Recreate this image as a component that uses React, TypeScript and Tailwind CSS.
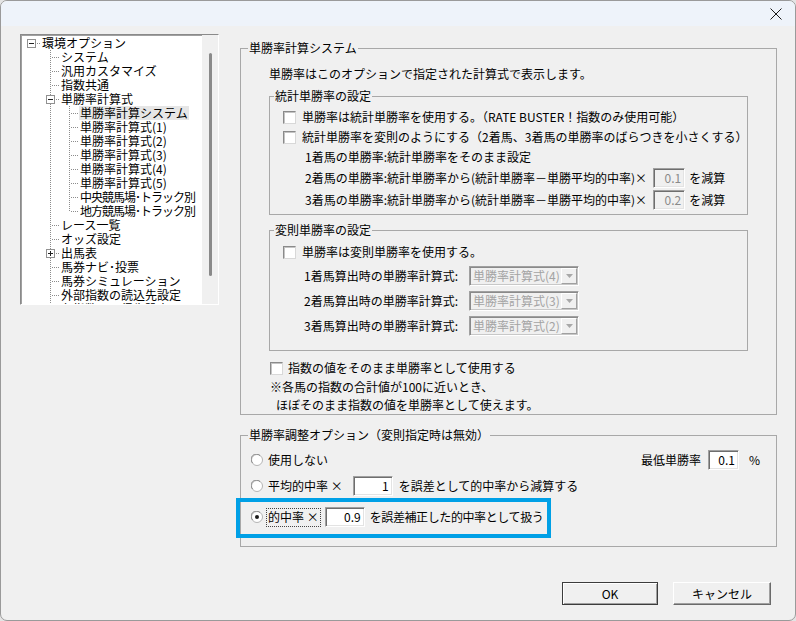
import React from "react";

type Cell = "blank" | "pipe" | "tee" | "ell" | "teeMinus" | "teePlus" | "rootMinus";

const TREE: { cells: Cell[]; label: string; selected?: boolean; tight?: boolean }[] = [
  { cells: ["rootMinus"], label: "環境オプション" },
  { cells: ["blank", "tee"], label: "システム" },
  { cells: ["blank", "tee"], label: "汎用カスタマイズ" },
  { cells: ["blank", "tee"], label: "指数共通" },
  { cells: ["blank", "teeMinus"], label: "単勝率計算式" },
  { cells: ["blank", "pipe", "tee"], label: "単勝率計算システム", selected: true },
  { cells: ["blank", "pipe", "tee"], label: "単勝率計算式(1)" },
  { cells: ["blank", "pipe", "tee"], label: "単勝率計算式(2)" },
  { cells: ["blank", "pipe", "tee"], label: "単勝率計算式(3)" },
  { cells: ["blank", "pipe", "tee"], label: "単勝率計算式(4)" },
  { cells: ["blank", "pipe", "tee"], label: "単勝率計算式(5)" },
  { cells: ["blank", "pipe", "tee"], label: "中央競馬場･トラック別", tight: true },
  { cells: ["blank", "pipe", "ell"], label: "地方競馬場･トラック別", tight: true },
  { cells: ["blank", "tee"], label: "レース一覧" },
  { cells: ["blank", "tee"], label: "オッズ設定" },
  { cells: ["blank", "teePlus"], label: "出馬表" },
  { cells: ["blank", "tee"], label: "馬券ナビ･投票" },
  { cells: ["blank", "tee"], label: "馬券シミュレーション" },
  { cells: ["blank", "tee"], label: "外部指数の読込先設定" },
  { cells: ["blank", "tee"], label: "各指数の取得先設定" },
];

// dotted tree connector, one 19x14 column
function TreeCell({ type }: { type: Cell }) {
  const v = (from: number, to: number) => {
    const r = [];
    for (let y = from; y < to; y += 2) r.push(<rect key={"v" + y} x={9} y={y} width={1} height={1} />);
    return r;
  };
  const h = (from: number) => {
    const r = [];
    for (let x = from; x < 19; x += 2) r.push(<rect key={"h" + x} x={x} y={7} width={1} height={1} />);
    return r;
  };
  const box = type === "teeMinus" || type === "teePlus" || type === "rootMinus";
  return (
    <svg width="19" height="14" viewBox="0 0 19 14" className="shrink-0">
      <g fill="#8c8c8c">
        {type === "pipe" && v(0, 14)}
        {type === "tee" && [...v(0, 14), ...h(11)]}
        {type === "ell" && [...v(0, 8), ...h(11)]}
        {(type === "teeMinus" || type === "teePlus") && [...v(0, 3), ...v(12, 14), ...h(15)]}
        {type === "rootMinus" && h(15)}
      </g>
      {box && (
        <>
          <rect x="5.5" y="3.5" width="8" height="8" fill="#fff" stroke="#919191" />
          <rect x="7" y="7" width="5" height="1" fill="#222" />
          {type === "teePlus" && <rect x="9" y="5" width="1" height="5" fill="#222" />}
        </>
      )}
    </svg>
  );
}

function CheckBox() {
  return (
    <span className="inline-block w-[13px] h-[13px] shrink-0 bg-white border border-t-[#8a8a8a] border-l-[#8a8a8a] border-r-[#d8d8d8] border-b-[#d8d8d8] shadow-[inset_1px_1px_0_#c4c4c4]" />
  );
}

function Radio({ checked }: { checked?: boolean }) {
  return (
    <svg width="12" height="12" viewBox="0 0 12 12" className="shrink-0">
      <circle cx="6" cy="6" r="5.5" fill="#fff" stroke="#b4b4b4" />
      <path d="M1.6 9 A5 5 0 0 1 9 1.6" fill="none" stroke="#8a8a8a" />
      {checked && <circle cx="6" cy="6" r="2" fill="#1a1a1a" />}
    </svg>
  );
}

function NumBox({ value, w, disabled }: { value: string; w: string; disabled?: boolean }) {
  return (
    <span
      className={
        "inline-flex items-center justify-end shrink-0 h-[20px] pr-[3px] border border-t-[#a0a0a0] border-l-[#a0a0a0] border-r-white border-b-white shadow-[inset_1px_1px_0_#6e6e6e,inset_-1px_-1px_0_#e3e3e3] " +
        w +
        (disabled ? " bg-[#f0f0f0] text-[#8a8a8a]" : " bg-white text-black")
      }
    >
      {value}
    </span>
  );
}

function Combo({ value }: { value: string }) {
  return (
    <span className="inline-flex items-center w-[110px] h-[20px] shrink-0 bg-[#f0f0f0] border border-t-[#a0a0a0] border-l-[#a0a0a0] border-r-white border-b-white shadow-[inset_1px_1px_0_#8a8a8a,inset_-1px_-1px_0_#c8c8c8]">
      <span className="flex-1 pl-[3px] text-[#a3a3a3] whitespace-nowrap">{value}</span>
      <span className="flex items-center justify-center w-[16px] h-[16px] mr-[1px] bg-[#f0f0f0] border border-t-white border-l-white border-r-[#a0a0a0] border-b-[#a0a0a0]">
        <svg width="7" height="4" viewBox="0 0 7 4">
          <path d="M0 0 H7 L3.5 4 Z" fill="#a8a8a8" />
        </svg>
      </span>
    </span>
  );
}

function Group({ title, className, children }: { title: string; className?: string; children: React.ReactNode }) {
  return (
    <fieldset className={"border border-[#a8a8a8] " + (className || "")}>
      <legend className="ml-[5px] px-[1px] leading-[14px]">{title}</legend>
      {children}
    </fieldset>
  );
}

export default function App() {
  return (
    <div className="w-[796px] h-[621px] bg-[#e4e4e4] text-[12px] text-black font-['Noto_Sans_CJK_JP','Noto_Sans',sans-serif]">
      <div className="w-full h-full flex flex-col rounded-[7px] border border-[#9a9a9a] bg-[#f0f0f0] overflow-hidden">
        {/* title bar */}
        <div className="h-[25px] shrink-0 bg-[#eef3fa] flex items-center justify-end pr-[13px]">
          <svg width="12" height="12" viewBox="0 0 12 12">
            <path d="M0.5 0.5 L11.5 11.5 M11.5 0.5 L0.5 11.5" stroke="#1a1a1a" strokeWidth="1" />
          </svg>
        </div>

        <div className="flex-1 flex flex-col pt-[8px] pl-[19px]">
          <div className="flex items-start">
            {/* tree */}
            <div className="w-[199px] h-[271px] shrink-0 flex bg-white border border-t-[#8a8a8a] border-l-[#8a8a8a] border-r-white border-b-white shadow-[inset_1px_1px_0_#a0a0a0] overflow-hidden">
              <div className="flex-1 pl-[1px] pt-[1px] overflow-hidden">
                {TREE.map((r, i) => (
                  <div key={i} className="flex items-center h-[14px] whitespace-nowrap">
                    {r.cells.map((c, j) => (
                      <TreeCell key={j} type={c} />
                    ))}
                    <span
                      className={
                        "px-[1px] leading-[14px]" +
                        (r.selected ? " bg-[#e6e6e6]" : "") +
                        (r.tight ? " tracking-[-1px]" : "")
                      }
                    >
                      {r.label}
                    </span>
                  </div>
                ))}
              </div>
              <div className="w-[16px] shrink-0 bg-[#f0f0f0] pt-[18px]">
                <div className="mx-auto w-[3px] h-[223px] rounded-full bg-[#8a8a8a]" />
              </div>
            </div>

            {/* right side */}
            <div className="ml-[21px] w-[537px] pt-[7px]">
              <Group title="単勝率計算システム" className="[&>legend]:ml-[7px]">
                <div className="px-[28px] pb-[1px]">
                  <div className="mt-[12px] leading-[14px]">単勝率はこのオプションで指定された計算式で表示します。</div>

                  <Group title="統計単勝率の設定" className="mt-[8px] [&>legend]:ml-[4px]">
                    <div className="pl-[13px] pt-[4px] pb-[3px]">
                      <div className="flex items-center h-[20px]">
                        <CheckBox />
                        <span className="ml-[6px]">単勝率は統計単勝率を使用する。（RATE BUSTER！指数のみ使用可能）</span>
                      </div>
                      <div className="flex items-center h-[20px]">
                        <CheckBox />
                        <span className="ml-[6px]">統計単勝率を変則のようにする（2着馬、3着馬の単勝率のばらつきを小さくする）</span>
                      </div>
                      <div className="flex items-center h-[20px] pl-[22px]">1着馬の単勝率:統計単勝率をそのまま設定</div>
                      <div className="flex items-center h-[22px] pl-[22px] whitespace-nowrap">
                        <span>2着馬の単勝率:統計単勝率から(統計単勝率－単勝平均的中率)×</span>
                        <span className="ml-[6px]"><NumBox value="0.1" w="w-[32px]" disabled /></span>
                        <span className="ml-[4px]">を減算</span>
                      </div>
                      <div className="flex items-center h-[22px] pl-[22px] whitespace-nowrap">
                        <span>3着馬の単勝率:統計単勝率から(統計単勝率－単勝平均的中率)×</span>
                        <span className="ml-[6px]"><NumBox value="0.2" w="w-[32px]" disabled /></span>
                        <span className="ml-[4px]">を減算</span>
                      </div>
                    </div>
                  </Group>

                  <Group title="変則単勝率の設定" className="mt-[8px] [&>legend]:ml-[4px]">
                    <div className="pl-[13px] pt-[5px] pb-[14px]">
                      <div className="flex items-center h-[20px]">
                        <CheckBox />
                        <span className="ml-[6px]">単勝率は変則単勝率を使用する。</span>
                      </div>
                      <div className="mt-[4px] pl-[21px] flex flex-col gap-[5px]">
                        {["単勝率計算式(4)", "単勝率計算式(3)", "単勝率計算式(2)"].map((v, i) => (
                          <div key={i} className="flex items-center h-[20px]">
                            <span className="w-[165px] whitespace-nowrap">{i + 1}着馬算出時の単勝率計算式:</span>
                            <Combo value={v} />
                          </div>
                        ))}
                      </div>
                    </div>
                  </Group>

                  <div className="mt-[7px] flex items-center h-[20px] pl-[1px]">
                    <CheckBox />
                    <span className="ml-[5px]">指数の値をそのまま単勝率として使用する</span>
                  </div>
                  <div className="pl-[1px] leading-[18px]">※各馬の指数の合計値が100に近いとき、</div>
                  <div className="pl-[7px] leading-[17px]">ほぼそのまま指数の値を単勝率として使えます。</div>
                </div>
              </Group>

              <Group title="単勝率調整オプション（変則指定時は無効）" className="mt-[13px] [&>legend]:ml-[7px]">
                <div className="pl-[10px] pr-[16px] pt-[8px] pb-[19px]">
                  <div className="flex items-center justify-between h-[20px]">
                    <div className="flex items-center">
                      <Radio />
                      <span className="ml-[5px]">使用しない</span>
                    </div>
                    <div className="flex items-center">
                      <span>最低単勝率</span>
                      <span className="ml-[7px]"><NumBox value="0.1" w="w-[31px]" /></span>
                      <span className="ml-[10px]">%</span>
                    </div>
                  </div>
                  <div className="mt-[6px] flex items-center h-[20px] whitespace-nowrap">
                    <Radio />
                    <span className="ml-[5px]">平均的中率 ×</span>
                    <span className="ml-[10px]"><NumBox value="1" w="w-[40px]" /></span>
                    <span className="ml-[6px]">を誤差として的中率から減算する</span>
                  </div>
                  <div className="relative mt-[11px] flex items-center h-[20px] whitespace-nowrap">
                    <Radio checked />
                    <span className="ml-[3px] h-[19px] flex items-center px-[1px] border border-dotted border-[#444]">的中率 ×</span>
                    <span className="ml-[4px]"><NumBox value="0.9" w="w-[40px]" /></span>
                    <span className="ml-[5px] tracking-[-0.4px]">を誤差補正した的中率として扱う</span>
                    <div className="absolute left-[-15px] top-[-9px] w-[315px] h-[40px] border-[4px] border-[#00a0e6] pointer-events-none" />
                  </div>
                </div>
              </Group>
            </div>
          </div>

          {/* buttons */}
          <div className="mt-[35px] flex justify-end gap-[15px] pr-[24px]">
            <button className="w-[96px] h-[23px] bg-[#f0f0f0] border border-[#3c3c3c] shadow-[inset_1px_1px_0_#ffffff,inset_-1px_-1px_0_#a0a0a0]">OK</button>
            <button className="w-[98px] h-[23px] bg-[#f0f0f0] border border-t-white border-l-white border-r-[#6a6a6a] border-b-[#6a6a6a] shadow-[inset_-1px_-1px_0_#a0a0a0]">キャンセル</button>
          </div>
        </div>
      </div>
    </div>
  );
}
